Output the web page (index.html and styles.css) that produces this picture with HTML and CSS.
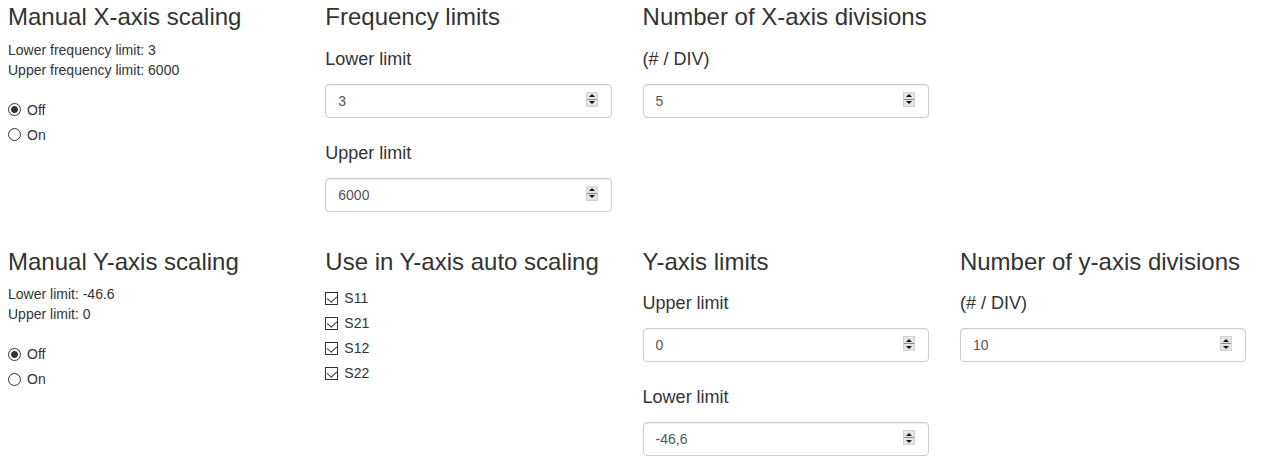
FILE: index.html
```html
<!DOCTYPE html>
<html>
<head>
  <link rel="stylesheet" href="styles.css">
</head>
<body>
  <div class="panel">
    <div class="row">
      <div class="col">
        <h3>Manual X-axis scaling</h3>
        <p class="summary">Lower frequency limit: 3<br>Upper frequency limit: 6000</p>
        <div class="choices">
          <label class="choice"><input type="radio" name="x-scale" checked> Off</label>
          <label class="choice"><input type="radio" name="x-scale"> On</label>
        </div>
      </div>
      <div class="col">
        <h3>Frequency limits</h3>
        <div class="field">
          <label>Lower limit</label>
          <div class="spin">
            <input type="text" value="3">
            <span class="spinner"><i class="up"></i><i class="down"></i></span>
          </div>
        </div>
        <div class="field">
          <label>Upper limit</label>
          <div class="spin">
            <input type="text" value="6000">
            <span class="spinner"><i class="up"></i><i class="down"></i></span>
          </div>
        </div>
      </div>
      <div class="col">
        <h3>Number of X-axis divisions</h3>
        <div class="field">
          <label>(# / DIV)</label>
          <div class="spin">
            <input type="text" value="5">
            <span class="spinner"><i class="up"></i><i class="down"></i></span>
          </div>
        </div>
      </div>
      <div class="col"></div>
    </div>

    <div class="row">
      <div class="col">
        <h3>Manual Y-axis scaling</h3>
        <p class="summary">Lower limit: -46.6<br>Upper limit: 0</p>
        <div class="choices">
          <label class="choice"><input type="radio" name="y-scale" checked> Off</label>
          <label class="choice"><input type="radio" name="y-scale"> On</label>
        </div>
      </div>
      <div class="col">
        <h3>Use in Y-axis auto scaling</h3>
        <div class="checks">
          <label class="choice"><input type="checkbox" checked> S11</label>
          <label class="choice"><input type="checkbox" checked> S21</label>
          <label class="choice"><input type="checkbox" checked> S12</label>
          <label class="choice"><input type="checkbox" checked> S22</label>
        </div>
      </div>
      <div class="col">
        <h3>Y-axis limits</h3>
        <div class="field">
          <label>Upper limit</label>
          <div class="spin">
            <input type="text" value="0">
            <span class="spinner"><i class="up"></i><i class="down"></i></span>
          </div>
        </div>
        <div class="field">
          <label>Lower limit</label>
          <div class="spin">
            <input type="text" value="-46,6">
            <span class="spinner"><i class="up"></i><i class="down"></i></span>
          </div>
        </div>
      </div>
      <div class="col">
        <h3>Number of y-axis divisions</h3>
        <div class="field">
          <label>(# / DIV)</label>
          <div class="spin">
            <input type="text" value="10">
            <span class="spinner"><i class="up"></i><i class="down"></i></span>
          </div>
        </div>
      </div>
    </div>
  </div>
</body>
</html>
```

FILE: styles.css
```css
body {
  margin: 0 8px;
  font-family: "Liberation Sans", Arial, sans-serif;
  font-size: 14px;
  line-height: 20px;
  color: #333;
  background-color: #fff;
}

.panel {
  padding-top: 4.4px;
  display: flex;
  flex-direction: column;
  gap: 37px;
}

.row {
  display: grid;
  grid-template-columns: repeat(4, 286.5px);
  column-gap: 30.8px;
  align-items: start;
}

h3 {
  margin: 0 0 9px;
  font-size: 24px;
  font-weight: normal;
  line-height: 1.1;
}

.summary {
  margin: 0 0 10px;
}

.choices {
  padding-top: 10px;
}

.checks {
  padding-top: 4px;
}

.choice {
  display: flex;
  align-items: center;
  gap: 6px;
  height: 20px;
  margin-bottom: 5px;
}

.choice input {
  appearance: none;
  -webkit-appearance: none;
  width: 13px;
  height: 13px;
  margin: 0;
  border: 1px solid #333;
  background-color: #fff;
  position: relative;
}

.choice input[type="radio"] {
  border-radius: 50%;
}

.choice input[type="radio"]:checked {
  background: radial-gradient(circle, #333 0 3px, #fff 3.8px);
}

.choice input[type="checkbox"]:checked::after {
  content: "";
  position: absolute;
  left: 3px;
  top: 1px;
  width: 5px;
  height: 7px;
  border-right: 1px solid #444;
  border-bottom: 1px solid #444;
  transform: rotate(40deg) skewX(-8deg);
}

.field {
  padding-top: 9px;
}

.field + .field {
  padding-top: 25px;
}

.field label {
  display: block;
  margin-bottom: 15px;
  font-size: 18px;
  line-height: 20px;
}

.spin {
  position: relative;
}

.spin input {
  display: block;
  box-sizing: border-box;
  width: 100%;
  height: 34px;
  padding: 6px 12px;
  font-family: inherit;
  font-size: 14px;
  color: #555;
  border: 1px solid #ccc;
  border-radius: 4px;
  box-shadow: inset 0 1px 1px rgba(0, 0, 0, 0.075);
  outline: none;
}

.spinner {
  position: absolute;
  top: 8px;
  right: 14px;
  width: 12px;
  height: 15px;
  box-sizing: border-box;
  border: 1px solid #d2d2d2;
  background-color: #e5e5e5;
  display: flex;
  flex-direction: column;
}

.spinner i {
  flex: 1;
  display: flex;
  align-items: center;
  justify-content: center;
}

.spinner .up {
  border-bottom: 1px solid #8a8a8a;
}

.spinner .up::before,
.spinner .down::before {
  content: "";
  border-left: 3px solid transparent;
  border-right: 3px solid transparent;
}

.spinner .up::before {
  border-bottom: 3px solid #111;
}

.spinner .down::before {
  border-top: 3px solid #111;
}
```
